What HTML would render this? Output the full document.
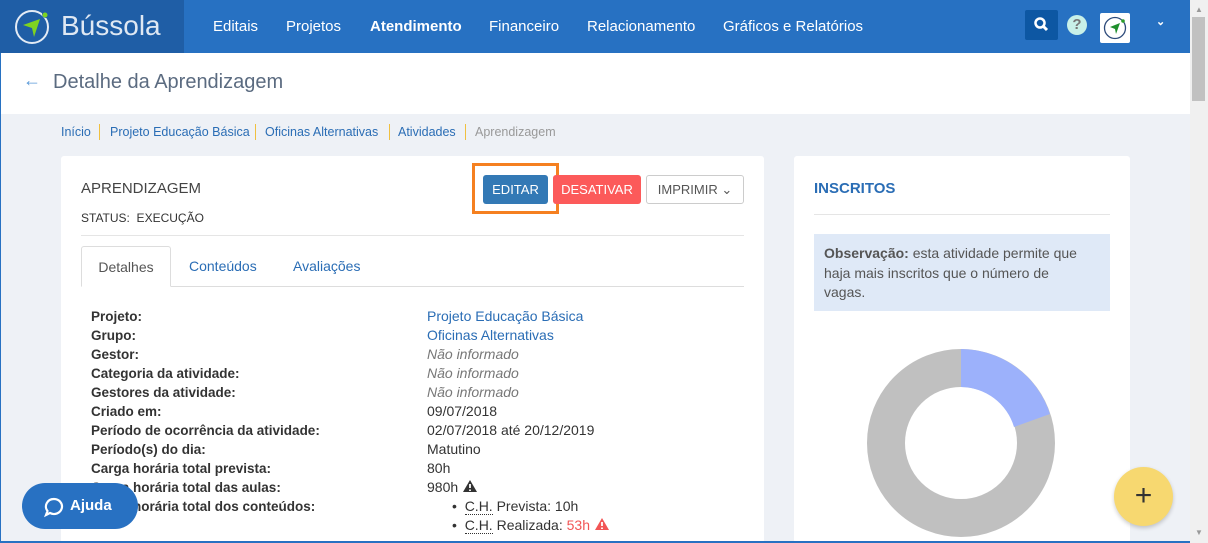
<!DOCTYPE html>
<html style="overflow:hidden"><head><meta charset="utf-8"><style>
*{box-sizing:border-box;margin:0;padding:0}
html,body{width:1208px;height:543px;overflow:hidden}
body{background:#eef1f6;font-family:"Liberation Sans",sans-serif;position:relative;color:#333}
.nav{position:absolute;left:0;top:0;width:1190px;height:53px;background:#2771c2}
.logo{position:absolute;left:0;top:0;width:184px;height:53px;background:#1f5ea6}
.logo span{position:absolute;left:61px;top:10px;font-size:28px;color:#dfe8f3}
.menu{position:absolute;top:18px;font-size:15px;color:#fff}
.hdr{position:absolute;left:0;top:53px;width:1190px;height:61px;background:#fff}
.card{position:absolute;background:#fff;border-radius:3px}
.bc{position:absolute;top:125px;font-size:12.5px;color:#2a6db5}
.sep{position:absolute;top:124px;width:1px;height:16px;background:#f0c040}
.lbl{position:absolute;left:91px;font-size:13.5px;font-weight:bold;color:#333}
.val{position:absolute;left:427px;font-size:14px;color:#333}
.lnk{color:#2a6db5}.it{font-style:italic;color:#777}
.sb{position:absolute;left:1190px;top:0;width:18px;height:543px;background:#f0f0f0}
</style></head><body>
<div class="nav">
 <div class="logo">
  <svg style="position:absolute;left:13px;top:8px" width="40" height="38" viewBox="0 0 40 38"><circle cx="19" cy="19" r="16" fill="none" stroke="#e3ebf5" stroke-width="2"/><circle cx="33" cy="6" r="4" fill="#1f5ea6"/><circle cx="32" cy="7" r="2.5" fill="#7ed321"/><path d="M10 17 L27 11 L21 29 L19 20 Z" fill="#7ed321"/></svg>
  <span>Bússola</span>
 </div>
 <div class="menu" style="left:213px">Editais</div>
 <div class="menu" style="left:286px">Projetos</div>
 <div class="menu" style="left:370px;font-weight:bold">Atendimento</div>
 <div class="menu" style="left:489px">Financeiro</div>
 <div class="menu" style="left:587px">Relacionamento</div>
 <div class="menu" style="left:723px">Gráficos e Relatórios</div>
 <div style="position:absolute;left:1025px;top:10px;width:33px;height:30px;background:#0d57a3;border-radius:2px"><svg width="33" height="30"><circle cx="15" cy="13" r="4.5" fill="none" stroke="#fff" stroke-width="2.5"/><path d="M18 16 L22 20" stroke="#fff" stroke-width="3"/></svg></div>
 <div style="position:absolute;left:1067px;top:15px;width:20px;height:20px;border-radius:50%;background:#c8f0e8;color:#777;font-weight:bold;font-size:15px;text-align:center;line-height:20px">?</div>
 <div style="position:absolute;left:1100px;top:13px;width:30px;height:30px;background:#fff;border-radius:2px"><svg width="30" height="30"><circle cx="15" cy="15" r="10.5" fill="none" stroke="#2c4a7a" stroke-width="1.3"/><circle cx="23" cy="8" r="1.8" fill="#2a9d2a"/><path d="M10 14 L20 10 L16 21 L15 16 Z" fill="#1e8f2c"/></svg></div>
 <div style="position:absolute;left:1156px;top:15px;color:#fff;font-size:11px;font-weight:bold">⌄</div>
</div>
<div class="hdr">
 <div style="position:absolute;left:23px;top:17px;font-size:18px;color:#5a9ad8">←</div>
 <div style="position:absolute;left:53px;top:18px;font-size:20px;color:#5b6b80">Detalhe da Aprendizagem</div>
</div>
<div class="bc" style="left:61px">Início</div><div class="sep" style="left:99px"></div>
<div class="bc" style="left:110px">Projeto Educação Básica</div><div class="sep" style="left:255px"></div>
<div class="bc" style="left:265px">Oficinas Alternativas</div><div class="sep" style="left:389px"></div>
<div class="bc" style="left:398px">Atividades</div><div class="sep" style="left:465px"></div>
<div class="bc" style="left:475px;color:#999">Aprendizagem</div>

<div class="card" style="left:61px;top:156px;width:703px;height:387px">
 <div style="position:absolute;left:20px;top:24px;font-size:15px;color:#444">APRENDIZAGEM</div>
 <div style="position:absolute;left:20px;top:55px;font-size:12px;color:#333">STATUS:&nbsp; EXECUÇÃO</div>
 <div style="position:absolute;left:411px;top:7px;width:87px;height:51px;border:3px solid #f58020"></div>
 <div style="position:absolute;left:422px;top:19px;width:65px;height:29px;background:#3379b5;border-radius:3px;color:#fff;font-size:13px;text-align:center;line-height:29px">EDITAR</div>
 <div style="position:absolute;left:492px;top:19px;width:88px;height:29px;background:#fc5a5a;border-radius:3px;color:#fff;font-size:13px;text-align:center;line-height:29px">DESATIVAR</div>
 <div style="position:absolute;left:585px;top:19px;width:98px;height:29px;border:1px solid #ccc;border-radius:3px;color:#555;font-size:13px;text-align:center;line-height:27px">IMPRIMIR ⌄</div>
 <div style="position:absolute;left:20px;top:79px;width:663px;height:1px;background:#e5e5e5"></div>
 <div style="position:absolute;left:20px;top:130px;width:663px;height:1px;background:#ddd"></div>
 <div style="position:absolute;left:20px;top:90px;width:90px;height:41px;border:1px solid #ddd;border-bottom:1px solid #fff;border-radius:3px 3px 0 0;background:#fff;font-size:14px;color:#555;text-align:center;line-height:40px">Detalhes</div>
 <div style="position:absolute;left:128px;top:102px;font-size:14px;color:#2a6db5">Conteúdos</div>
 <div style="position:absolute;left:232px;top:102px;font-size:14px;color:#2a6db5">Avaliações</div>
</div>
<div class="lbl" style="top:309px">Projeto:</div><div class="val lnk" style="top:308px">Projeto Educação Básica</div>
<div class="lbl" style="top:328px">Grupo:</div><div class="val lnk" style="top:327px">Oficinas Alternativas</div>
<div class="lbl" style="top:347px">Gestor:</div><div class="val it" style="top:346px">Não informado</div>
<div class="lbl" style="top:366px">Categoria da atividade:</div><div class="val it" style="top:365px">Não informado</div>
<div class="lbl" style="top:385px">Gestores da atividade:</div><div class="val it" style="top:384px">Não informado</div>
<div class="lbl" style="top:404px">Criado em:</div><div class="val" style="top:403px">09/07/2018</div>
<div class="lbl" style="top:423px">Período de ocorrência da atividade:</div><div class="val" style="top:422px">02/07/2018 até 20/12/2019</div>
<div class="lbl" style="top:442px">Período(s) do dia:</div><div class="val" style="top:441px">Matutino</div>
<div class="lbl" style="top:461px">Carga horária total prevista:</div><div class="val" style="top:460px">80h</div>
<div class="lbl" style="top:480px">Carga horária total das aulas:</div><div class="val" style="top:479px">980h <svg width="16" height="14" style="vertical-align:-1px"><path d="M8 1 L15 13 L1 13 Z" fill="#333"/><path d="M8 5 V9 M8 10.5 V12" stroke="#fff" stroke-width="1.8"/></svg></div>
<div class="lbl" style="top:499px">Carga horária total dos conteúdos:</div>
<div class="val" style="top:498px;left:452px">•&nbsp; <span style="border-bottom:1px dotted #333">C.H.</span> Prevista: 10h</div>
<div class="val" style="top:517px;left:452px">•&nbsp; <span style="border-bottom:1px dotted #333">C.H.</span> Realizada: <span style="color:#f25555">53h <svg width="16" height="14" style="vertical-align:-1px"><path d="M8 1 L15 13 L1 13 Z" fill="#f25555"/><path d="M8 5 V9 M8 10.5 V12" stroke="#fff" stroke-width="1.8"/></svg></span></div>

<div class="card" style="left:794px;top:156px;width:336px;height:387px">
 <div style="position:absolute;left:20px;top:24px;font-size:15px;font-weight:bold;color:#2a6db5">INSCRITOS</div>
 <div style="position:absolute;left:20px;top:58px;width:296px;height:1px;background:#e5e5e5"></div>
 <div style="position:absolute;left:20px;top:78px;width:296px;height:77px;background:#dfe9f7;padding:10px 30px 10px 10px;font-size:14px;line-height:19.5px;color:#555"><b>Observação:</b> esta atividade permite que haja mais inscritos que o número de vagas.</div>
 <svg style="position:absolute;left:72px;top:192px" width="190" height="190" viewBox="0 0 190 190"><circle cx="95" cy="95" r="75" fill="none" stroke="#c0c0c0" stroke-width="38"/><path d="M95 1 A94 94 0 0 1 184 66 L148 79 A56 56 0 0 0 95 39 Z" fill="#9cb1fb"/></svg>
</div>

<div style="position:absolute;left:22px;top:483px;width:116px;height:46px;border-radius:23px;background:#2871c2;color:#fff;font-weight:bold;font-size:15px;line-height:46px;padding-left:48px"><svg style="position:absolute;left:21px;top:13px" width="22" height="22"><path d="M11 3a8 7.5 0 1 1 -4 14l-4 2 1.5-4A8 7.5 0 0 1 11 3z" fill="none" stroke="#fff" stroke-width="2.2"/></svg>Ajuda</div>
<div style="position:absolute;left:1114px;top:467px;width:59px;height:59px;border-radius:50%;background:#f7d870;color:#333;font-size:30px;text-align:center;line-height:57px;box-shadow:0 2px 4px rgba(0,0,0,.2)">+</div>
<div class="sb"><div style="position:absolute;left:2px;top:17px;width:13px;height:84px;background:#c1c1c1"></div><div style="position:absolute;left:5px;top:5px;font-size:8px;color:#999">▲</div><div style="position:absolute;left:5px;top:528px;font-size:8px;color:#999">▼</div></div>
<div style="position:absolute;left:0;top:53px;width:1px;height:490px;background:#2771c2"></div>
<div style="position:absolute;left:0;top:541px;width:1190px;height:2px;background:#2771c2"></div>
</body></html>
